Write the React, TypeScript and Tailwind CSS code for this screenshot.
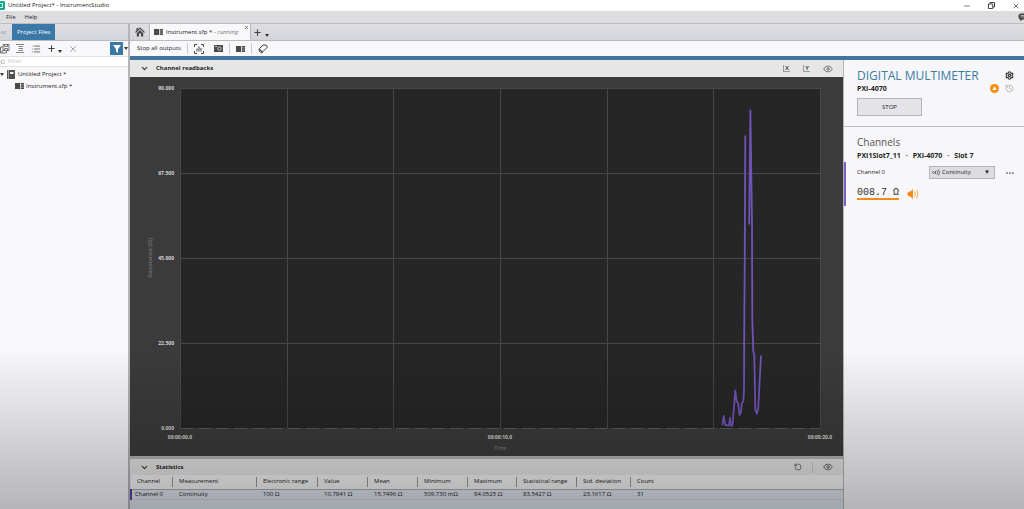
import React, { useState } from 'react';
import { X, Plus, Minus, Settings, History, Eye, RotateCcw, ChevronDown, Search, List } from 'lucide-react';

const yTicks = [
  { label: '90.000', y: 11 },
  { label: '67.500', y: 96 },
  { label: '45.000', y: 181 },
  { label: '22.500', y: 266 },
  { label: '0.000', y: 351 },
];

const xTicks = [
  { label: '00:00:00.0', x: 50 },
  { label: '00:00:10.0', x: 370 },
  { label: '00:00:20.0', x: 690 },
];

const gridX = [157, 263, 370, 477, 583];

const stats = [
  { name: 'Channel', value: 'Channel 0', width: 'w-[42px]' },
  { name: 'Measurement', value: 'Continuity', width: 'w-[84px]' },
  { name: 'Electronic range', value: '100 Ω', width: 'w-[61px]' },
  { name: 'Value', value: '10.7841 Ω', width: 'w-[50px]' },
  { name: 'Mean', value: '15.7496 Ω', width: 'w-[50px]' },
  { name: 'Minimum', value: '509.730 mΩ', width: 'w-[50px]' },
  { name: 'Maximum', value: '84.0525 Ω', width: 'w-[49px]' },
  { name: 'Statistical range', value: '83.5427 Ω', width: 'w-[60px]' },
  { name: 'Std. deviation', value: '23.1617 Ω', width: 'w-[54px]' },
  { name: 'Count', value: '31', width: '' },
];

const PanelIcon = () => (
  <svg viewBox="0 0 18 12" className="w-[9px] h-[6px] shrink-0" fill="#4a4a4a">
    <rect width="10" height="12" />
    <rect x="11.5" width="6.5" height="3.4" />
    <rect x="11.5" y="4.3" width="6.5" height="3.4" />
    <rect x="11.5" y="8.6" width="6.5" height="3.4" />
  </svg>
);

const DownArrow = () => (
  <svg viewBox="0 0 8 6" className="w-[4px] h-[3px] shrink-0" fill="#333"><path d="M0 0h8L4 6z" /></svg>
);

const Divider = () => <span className="w-px h-[11px] bg-[#c9c9cc]" />;

const TitleBar = () => (
  <header className="h-[11px] bg-white flex items-center justify-between">
    <div className="flex items-center gap-[3px]">
      <svg viewBox="0 0 10 18" className="w-[5px] h-[9px]">
        <path d="M0 0h7q3 0 3 3v12q0 3-3 3H0z" fill="#12a88c" />
        <path d="M0 5h5v8H0" fill="none" stroke="#d8fff4" strokeWidth="2" />
      </svg>
      <h1 className="text-[6px]">Untitled Project* - InstrumentStudio</h1>
    </div>
    <div className="flex gap-[17px] pr-[4px]">
      <button aria-label="Minimize"><Minus size={8} color="#333" /></button>
      <button aria-label="Restore">
        <svg viewBox="0 0 14 14" className="w-[7px] h-[7px]" fill="none" stroke="#333" strokeWidth="1.8">
          <path d="M1 4h8.5v9H1zM4 4V1h9v9H9.5" />
        </svg>
      </button>
      <button aria-label="Close"><X size={8} color="#333" /></button>
    </div>
  </header>
);

const MenuBar = () => (
  <nav className="h-[13px] bg-[#dddddf] border-b border-[#bcbcbf] flex items-center pl-[6px] gap-[9px]">
    <button>File</button>
    <button>Help</button>
    <button aria-label="Feedback" className="ml-auto">
      <svg viewBox="0 0 12 18" className="w-[6px] h-[9px]">
        <path d="M12 1H6Q1 1 1 6v2q0 5 4 5l-1 4 5-4h3z" fill="#444" />
        <path d="M5 5h7M5 8h7" stroke="#ddd" strokeWidth="1.4" />
      </svg>
    </button>
  </nav>
);

const ProjectPanel = () => (
  <aside className="w-[130px] shrink-0 flex flex-col bg-[#f8f7fa] border-r-2 border-[#b3b3b8]">
    <div className="h-[17px] bg-linear-to-b from-[#dfdfe3] to-[#d2d4d9] border-b border-[#bcbcbf] flex items-stretch">
      <button aria-label="Collapse panel" className="w-[12px] flex items-center pl-px">
        <svg viewBox="0 0 10 6" className="w-[5px] h-[3px]" fill="none" stroke="#777" strokeWidth="1.4">
          <path d="M4 0 1 3l3 3M9 0 6 3l3 3" />
        </svg>
      </button>
      <button className="bg-[#3a78a8] text-white px-[5px]">Project Files</button>
    </div>
    <div className="h-[15px] flex items-center text-[#444]">
      <button aria-label="Save all">
        <svg viewBox="0 0 20 20" className="w-[10px] h-[10px]" fill="none" stroke="#555" strokeWidth="1.6">
          <path d="M6 1h12v12H6zM9 1v4h6V1M9 13V9h6v4M6 6H1v12h12v-5M4 18v-4h2" />
        </svg>
      </button>
      <button aria-label="Expand all" className="ml-[6px]">
        <svg viewBox="0 0 16 18" className="w-[8px] h-[9px]" fill="none" stroke="#666" strokeWidth="1.6">
          <path d="M0 1h16M5 5h9M5 9h9M5 13h9M0 17h16" />
        </svg>
      </button>
      <button aria-label="List view" className="ml-[7px]"><List size={10} color="#555" /></button>
      <button aria-label="Add item" className="ml-[6px] flex items-end gap-[2px]">
        <Plus size={9} strokeWidth={3} />
        <DownArrow />
      </button>
      <button aria-label="Remove item" className="ml-[6px]"><X size={10} color="#999" /></button>
      <button aria-label="Filter options" className="ml-auto flex items-center gap-px">
        <span className="w-[13px] h-[13px] bg-[#3a78a8] flex items-center justify-center">
          <svg viewBox="0 0 16 16" className="w-[8px] h-[8px]" fill="#fff"><path d="M0 0h16l-6 8v8l-4-3V8z" /></svg>
        </span>
        <DownArrow />
      </button>
    </div>
    <label className="h-[11px] bg-white border-y border-[#e1e1e5] flex items-center gap-[2px]">
      <Search size={6} color="#888" className="-scale-x-100" />
      <input placeholder="Filter" aria-label="Filter" className="w-full bg-transparent outline-none placeholder:text-[#c8c8cc]" />
    </label>
    <ul className="pt-px">
      <li className="h-[12px] flex items-center">
        <span className="w-[7px]"><DownArrow /></span>
        <svg viewBox="0 0 16 18" className="w-[8px] h-[9px] mr-[3px]">
          <rect width="16" height="18" rx="1" fill="#505050" />
          <path d="M3 0v18" stroke="#ddd" strokeWidth="1.2" />
          <path d="M6 4h7v4H6z" fill="#eee" />
        </svg>
        Untitled Project *
      </li>
      <li className="h-[12px] flex items-center gap-[2px] pl-[15px]"><PanelIcon />Instrument.sfp *</li>
    </ul>
  </aside>
);

const DocumentTabs = () => (
  <div className="h-[17px] bg-linear-to-b from-[#dfdfe3] to-[#d2d4d9] border-b border-[#bcbcbf] flex items-stretch">
    <button aria-label="Home" className="w-[20px] flex items-center justify-center border-r border-[#b9b9bd]">
      <svg viewBox="0 0 20 20" className="w-[10px] h-[10px]" fill="#4a4a4a">
        <path d="M3 2h3v4L3 8z" />
        <path d="M1 11 10 2l9 9" fill="none" stroke="#4a4a4a" strokeWidth="2.2" />
        <path d="M10 6l6.5 6.500V19H12v-6H8v6H3.500v-6.500z" />
      </svg>
    </button>
    <div className="bg-[#f8f7fa] flex items-center gap-[3px] pl-[4px] pr-px border-r border-[#b9b9bd]">
      <PanelIcon />
      <span>Instrument.sfp * - <em className="text-[#777]">running</em></span>
      <button aria-label="Close tab" className="self-start ml-[3px] mt-px"><X size={5} color="#444" strokeWidth={3} /></button>
    </div>
    <button aria-label="New tab" className="flex items-center gap-[3px] pl-[2px]">
      <Plus size={9} color="#444" strokeWidth={3} />
      <span className="pt-[6px]"><DownArrow /></span>
    </button>
  </div>
);

const Toolbar = () => (
  <div className="h-[15px] bg-[#f8f7fa] flex items-center gap-[6px] pl-[7px]">
    <button>Stop all outputs</button>
    <Divider />
    <button aria-label="Capture data">
      <svg viewBox="0 0 20 20" className="w-[10px] h-[10px]" fill="none" stroke="#444" strokeWidth="2">
        <path d="M1 6V1h5M14 1h5v5M19 14v5h-5M6 19H1v-5M6 15V9M10 15V5M14 15V8" />
      </svg>
    </button>
    <button aria-label="Take snapshot" className="ml-[4px]">
      <svg viewBox="0 0 18 14" className="w-[9px] h-[7px]">
        <rect width="18" height="14" rx="1" fill="#4a4a4a" />
        <circle cx="11" cy="7" r="3.5" fill="none" stroke="#eee" strokeWidth="1.5" />
        <path d="M2 3h4" stroke="#eee" strokeWidth="1.5" />
      </svg>
    </button>
    <Divider />
    <button aria-label="Edit layout"><PanelIcon /></button>
    <Divider />
    <button aria-label="Clear data">
      <svg viewBox="0 0 20 20" className="w-[10px] h-[10px]" fill="none" stroke="#444" strokeWidth="2">
        <path d="M2 10 10 2h6l3 4-10 10zM2 10l1 5 5 3 1-2M2 10l7 6" />
      </svg>
    </button>
  </div>
);

const AxisIcon = ({ axis }: { axis: string }) => (
  <span className="w-[7px] h-[7px] border-l border-b border-[#999] text-[6px] leading-[6px] font-bold text-center text-[#555] block">{axis}</span>
);

const Chart = () => (
  <svg viewBox="0 0 713 379" className="w-full block bg-[#3b3b3b]" role="img" aria-label="Resistance over time">
    <rect x="50" y="11" width="640" height="340" fill="#262626" />
    <g stroke="#474747" strokeWidth="1">
      {gridX.map(x => <path key={x} d={`M${x}.5 11V351`} />)}
      {yTicks.slice(1, 4).map(t => <path key={t.y} d={`M50 ${t.y}.5H690`} />)}
      <path d="M50.5 351V11.5H690.5V351" fill="none" />
      <path d="M50 351.5H690" stroke="#5a5a5a" strokeDasharray="13 5" />
    </g>
    <g fill="none" stroke="#7153b8" strokeWidth="1.8" strokeLinejoin="round">
      <path d="M592.3 348 593.7 339 595.3 348 599 348.7 600 340.7 601 348.7 602.5 348.5 605.3 313.5 606.7 324 608 326 609.7 338 611 335 611.7 326.5 613.3 324.5 614 313 614.3 243 614.7 190 615.3 58.5" />
      <path d="M619.2 147.5 620.4 33.5 622 146 622.3 243 623.3 274.5 624.3 277.5 625.3 333 627 336.5 628.3 330 631 278.5" />
    </g>
    <g fill="#d6d6d6" className="text-[5px] font-bold">
      {yTicks.map(t => <text key={t.label} x="44" y={t.y + 2} textAnchor="end">{t.label}</text>)}
      {xTicks.map(t => <text key={t.label} x={t.x} y="362" textAnchor="middle">{t.label}</text>)}
    </g>
    <g fill="#858585" className="text-[6px]" textAnchor="middle">
      <text x="370" y="373" fontStyle="italic">Time</text>
      <text transform="translate(22 181) rotate(-90)">Resistance (Ω)</text>
    </g>
  </svg>
);

const Readbacks = () => (
  <section className="min-w-0">
    <div className="h-[17px] bg-[#e6e6e6] flex items-center px-[10px]">
      <button aria-label="Collapse readbacks"><ChevronDown size={9} color="#333" strokeWidth={3} /></button>
      <h2 className="font-bold ml-[7px] flex-1">Channel readbacks</h2>
      <div className="flex items-center gap-[13px]">
        <button aria-label="Fit X axis"><AxisIcon axis="X" /></button>
        <button aria-label="Fit Y axis"><AxisIcon axis="Y" /></button>
        <button aria-label="Show readbacks"><Eye size={10} color="#666" /></button>
      </div>
    </div>
    <Chart />
  </section>
);

const Statistics = () => (
  <section className="flex-1 bg-[#dfe4ee] border-t-3 border-[#b4b4b4]">
    <div className="h-[16px] bg-[#e6e6e6] flex items-center px-[10px]">
      <button aria-label="Collapse statistics"><ChevronDown size={9} color="#333" strokeWidth={3} /></button>
      <h2 className="font-bold ml-[7px] flex-1">Statistics</h2>
      <div className="flex items-center gap-[10px]">
        <button aria-label="Reset statistics"><RotateCcw size={8} color="#444" /></button>
        <Divider />
        <button aria-label="Show statistics"><Eye size={10} color="#555" /></button>
      </div>
    </div>
    <table className="w-full table-fixed border-collapse text-left">
      <thead className="bg-[#f4f4f6] border-b border-[#a9abb0]">
        <tr className="h-[14px]">
          {stats.map(s => (
            <th key={s.name} className={`${s.width} group pl-[6px] font-normal whitespace-nowrap`}>
              <span className="flex items-center h-[10px] border-r border-[#999] group-last:border-r-0">{s.name}</span>
            </th>
          ))}
        </tr>
      </thead>
      <tbody>
        <tr className="h-[10px] border-b border-[#cdd2dc]">
          {stats.map((s, i) => (
            <td key={s.name} className={i === 0 ? 'pl-[3px] border-l-2 border-[#5b3fb0] whitespace-nowrap' : 'pl-[6px] whitespace-nowrap'}>{s.value}</td>
          ))}
        </tr>
      </tbody>
    </table>
  </section>
);

const DevicePanel = () => {
  const [mode, setMode] = useState('Continuity');

  return (
    <aside className="w-[181px] shrink-0 bg-[#f7f6f9] border-l border-[#b3b3b8]">
      <div className="pl-[13px] pr-[10px] pt-[8px] pb-[10px] border-b border-[#bdbdc1]">
        <div className="flex items-center justify-between h-[15px]">
          <h2 className="text-[12px] leading-[15px] text-[#3b7ba3]">DIGITAL MULTIMETER</h2>
          <button aria-label="Settings"><Settings size={9} color="#333" strokeWidth={3} /></button>
        </div>
        <div className="flex items-center h-[10px] gap-[6px]">
          <p className="text-[7px] font-bold flex-1">PXI-4070</p>
          <svg viewBox="0 0 18 18" className="w-[9px] h-[9px]">
            <circle cx="9" cy="9" r="9" fill="#f58a0b" />
            <path d="M9 4.5 13.5 12h-9z" fill="#fff" />
          </svg>
          <button aria-label="History"><History size={9} color="#aaa" /></button>
        </div>
        <button className="mt-[5px] w-[65px] h-[18px] bg-[#e4e4e8] border border-[#b5b5b9] block">STOP</button>
      </div>
      <div className="pt-[8px] pr-[10px]">
        <h3 className="pl-[13px] text-[10px] leading-[15px] text-[#555]">Channels</h3>
        <p className="pl-[13px] text-[7px] leading-[11px] font-bold flex gap-[5px]">
          <span>PXI1Slot7_11</span><span>·</span><span>PXI-4070</span><span>·</span><span>Slot 7</span>
        </p>
        <div className="border-l-2 border-[#7a5fc0] pl-[11px] mt-px pb-[2px]">
          <div className="flex items-center h-[21px]">
            <label htmlFor="mode" className="flex-1">Channel 0</label>
            <div className="w-[66px] h-[13px] bg-[#dddde1] border border-[#b5b5b9] flex items-center pl-[2px] pr-[4px] mr-[11px]">
              <svg viewBox="0 0 18 14" className="w-[9px] h-[7px] shrink-0" fill="none" stroke="#555" strokeWidth="1.6">
                <circle cx="3" cy="7" r="2" />
                <path d="M7 4v6M10 3q3 4 0 8M13 1q4 6 0 12" />
              </svg>
              <select id="mode" value={mode} onChange={e => setMode(e.target.value)} className="appearance-none bg-transparent flex-1 pl-px outline-none">
                <option>Continuity</option>
                <option>Resistance</option>
              </select>
              <span className="text-[6px]">▼</span>
            </div>
            <button aria-label="More options">
              <svg viewBox="0 0 16 4" className="w-[8px] h-[2px] block" fill="#444"><circle cx="2" cy="2" r="1.7" /><circle cx="8" cy="2" r="1.7" /><circle cx="14" cy="2" r="1.7" /></svg>
            </button>
          </div>
          <div className="flex items-center gap-[8px] h-[21px]">
            <output className="font-['Liberation_Mono',monospace] text-[10px] leading-[11px] text-[#333] border-b-2 border-[#f08c1a]">008.7 Ω</output>
            <svg viewBox="0 0 24 20" className="w-[12px] h-[10px]" fill="none" stroke="#f5a040" strokeWidth="1.8">
              <path d="M0 10 4 5h3l5-5v20l-5-5H4z" fill="#ef8c1c" stroke="none" />
              <path d="M15 5q4 5 0 10M19 2q6 8 0 16" />
            </svg>
          </div>
        </div>
      </div>
    </aside>
  );
};

const App: React.FC = () => (
  <div className="relative min-h-screen flex flex-col bg-[#f7f6f9] text-[6px] leading-[9px] text-[#222] font-['Open_Sans',sans-serif]">
    <TitleBar />
    <MenuBar />
    <div className="flex-1 flex">
      <ProjectPanel />
      <main className="flex-1 min-w-0 flex flex-col">
        <DocumentTabs />
        <Toolbar />
        <div className="h-[4px] bg-[#41759f]" />
        <div className="flex-1 flex">
          <div className="flex-1 min-w-0 flex flex-col">
            <Readbacks />
            <Statistics />
          </div>
          <DevicePanel />
        </div>
      </main>
    </div>
    <div className="absolute inset-x-0 bottom-0 h-[160px] bg-linear-to-b from-transparent to-black/27 pointer-events-none" />
  </div>
);

export default App;
